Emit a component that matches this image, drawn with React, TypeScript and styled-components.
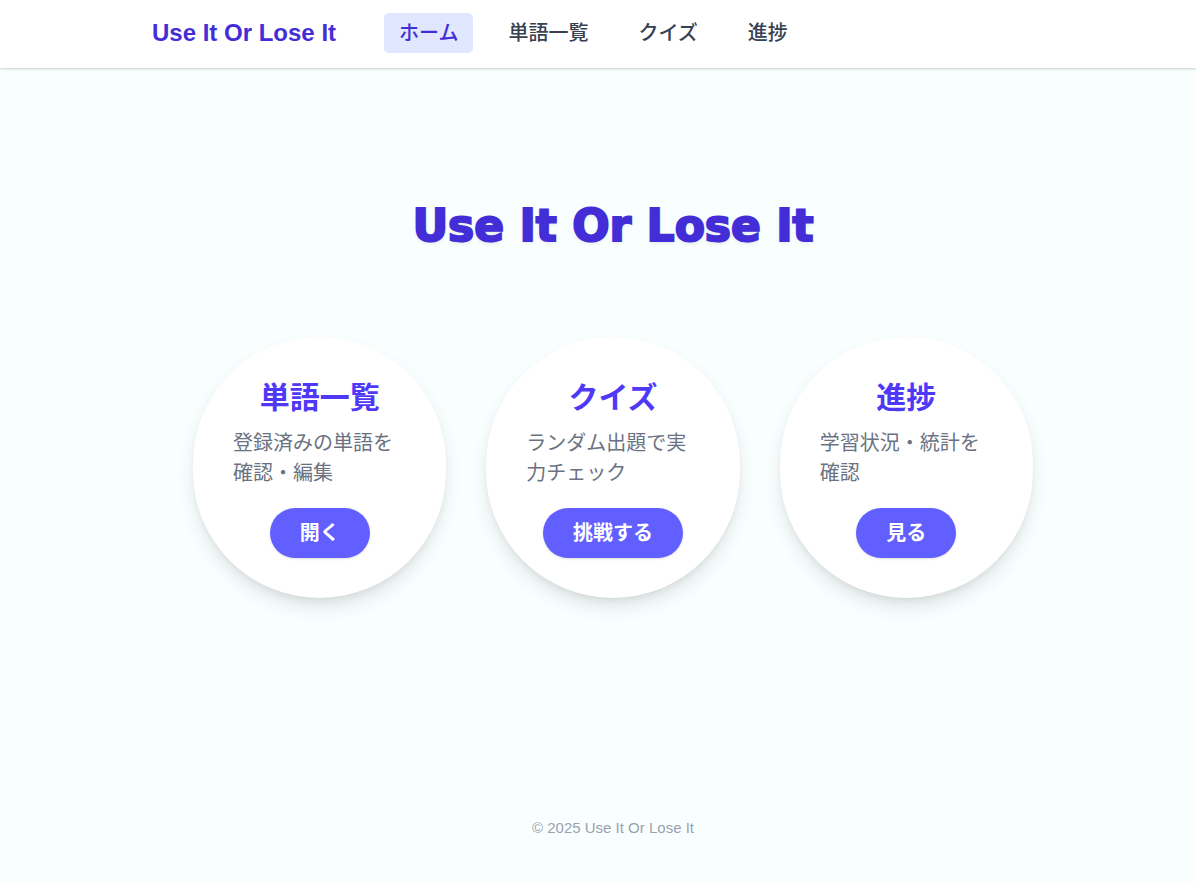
import React from "react";
import styled, { createGlobalStyle } from "styled-components";

const GlobalStyle = createGlobalStyle`
  *, *::before, *::after { box-sizing: border-box; }
  body {
    margin: 0;
    background: #f9ffff;
    font-family: "Liberation Sans", "Noto Sans CJK JP", sans-serif;
    font-size: 20px;
    line-height: 30px;
  }
  h1, h2, p, ul { margin: 0; padding: 0; }
`;

const Page = styled.div`
  min-height: 100vh;
  display: flex;
  flex-direction: column;
`;

const Header = styled.header`
  background: #ffffff;
  box-shadow: 0 1px 3px 0 rgba(0, 0, 0, 0.1), 0 1px 2px 0 rgba(0, 0, 0, 0.1);
`;

const HeaderInner = styled.div`
  max-width: 892px;
  margin: 0 auto;
  padding: 13px 0 15px;
  display: flex;
  align-items: center;
  gap: 48px;
`;

const Brand = styled.a`
  color: #432dd7;
  font-size: 24px;
  font-weight: 700;
  text-decoration: none;
  white-space: nowrap;
`;

const NavList = styled.ul`
  display: flex;
  gap: 20px;
  list-style: none;
`;

const NavLink = styled.a<{ $active?: boolean }>`
  display: block;
  padding: 5px 15px;
  border-radius: 5px;
  background: ${({ $active }) => ($active ? "#e0e7ff" : "transparent")};
  color: ${({ $active }) => ($active ? "#432dd7" : "#364153")};
  font-weight: 500;
  text-decoration: none;
  white-space: nowrap;
`;

const Main = styled.main`
  flex: 1;
  display: flex;
  flex-direction: column;
  align-items: center;
  gap: 79px;
  padding: 126px 30px 60px 60px;
`;

const Title = styled.h1`
  color: #432dd7;
  font-family: "DejaVu Sans", sans-serif;
  font-size: 44px;
  font-weight: 700;
  line-height: 64px;
  text-align: center;
  text-shadow: 0 2px 4px rgba(0, 0, 0, 0.1);
  -webkit-text-stroke: 2px #432dd7;
`;

const CardGrid = styled.div`
  width: 100%;
  max-width: 840px;
  display: grid;
  grid-template-columns: repeat(3, minmax(0, 1fr));
  gap: 40px;
`;

const Card = styled.section`
  display: flex;
  flex-direction: column;
  align-items: center;
  padding: 40px;
  border-radius: 999px;
  background: #ffffff;
  box-shadow: 0 10px 20px -3px rgba(0, 0, 0, 0.12), 0 4px 8px -4px rgba(0, 0, 0, 0.1);
`;

const CardTitle = styled.h2`
  margin-bottom: 9px;
  color: #4f39f6;
  font-size: 30px;
  font-weight: 700;
  line-height: 42px;
`;

const CardText = styled.p`
  width: 100%;
  margin-bottom: 20px;
  color: #6a7282;
`;

const CardButton = styled.button`
  padding: 10px 30px;
  border: 0;
  border-radius: 25px;
  background: #615fff;
  box-shadow: 0 1px 3px 0 rgba(0, 0, 0, 0.1), 0 1px 2px -1px rgba(0, 0, 0, 0.1);
  color: #ffffff;
  font: inherit;
  font-weight: 700;
  white-space: nowrap;
  cursor: pointer;
`;

const Footer = styled.footer`
  padding: 0 0 44px 30px;
  color: #99a1af;
  font-size: 15px;
  line-height: 20px;
  text-align: center;
`;

const navItems = ["ホーム", "単語一覧", "クイズ", "進捗"];

const cards = [
  { title: "単語一覧", text: "登録済みの単語を確認・編集", action: "開く" },
  { title: "クイズ", text: "ランダム出題で実力チェック", action: "挑戦する" },
  { title: "進捗", text: "学習状況・統計を確認", action: "見る" },
];

export default function App() {
  return (
    <Page lang="ja">
      <GlobalStyle />
      <Header>
        <HeaderInner>
          <Brand href="#">Use It Or Lose It</Brand>
          <nav>
            <NavList>
              {navItems.map((label, i) => (
                <li key={label}>
                  <NavLink href="#" $active={i === 0} aria-current={i === 0 ? "page" : undefined}>
                    {label}
                  </NavLink>
                </li>
              ))}
            </NavList>
          </nav>
        </HeaderInner>
      </Header>
      <Main>
        <Title>Use It Or Lose It</Title>
        <CardGrid>
          {cards.map((card) => (
            <Card key={card.title}>
              <CardTitle>{card.title}</CardTitle>
              <CardText>{card.text}</CardText>
              <CardButton type="button">{card.action}</CardButton>
            </Card>
          ))}
        </CardGrid>
      </Main>
      <Footer>© 2025 Use It Or Lose It</Footer>
    </Page>
  );
}
